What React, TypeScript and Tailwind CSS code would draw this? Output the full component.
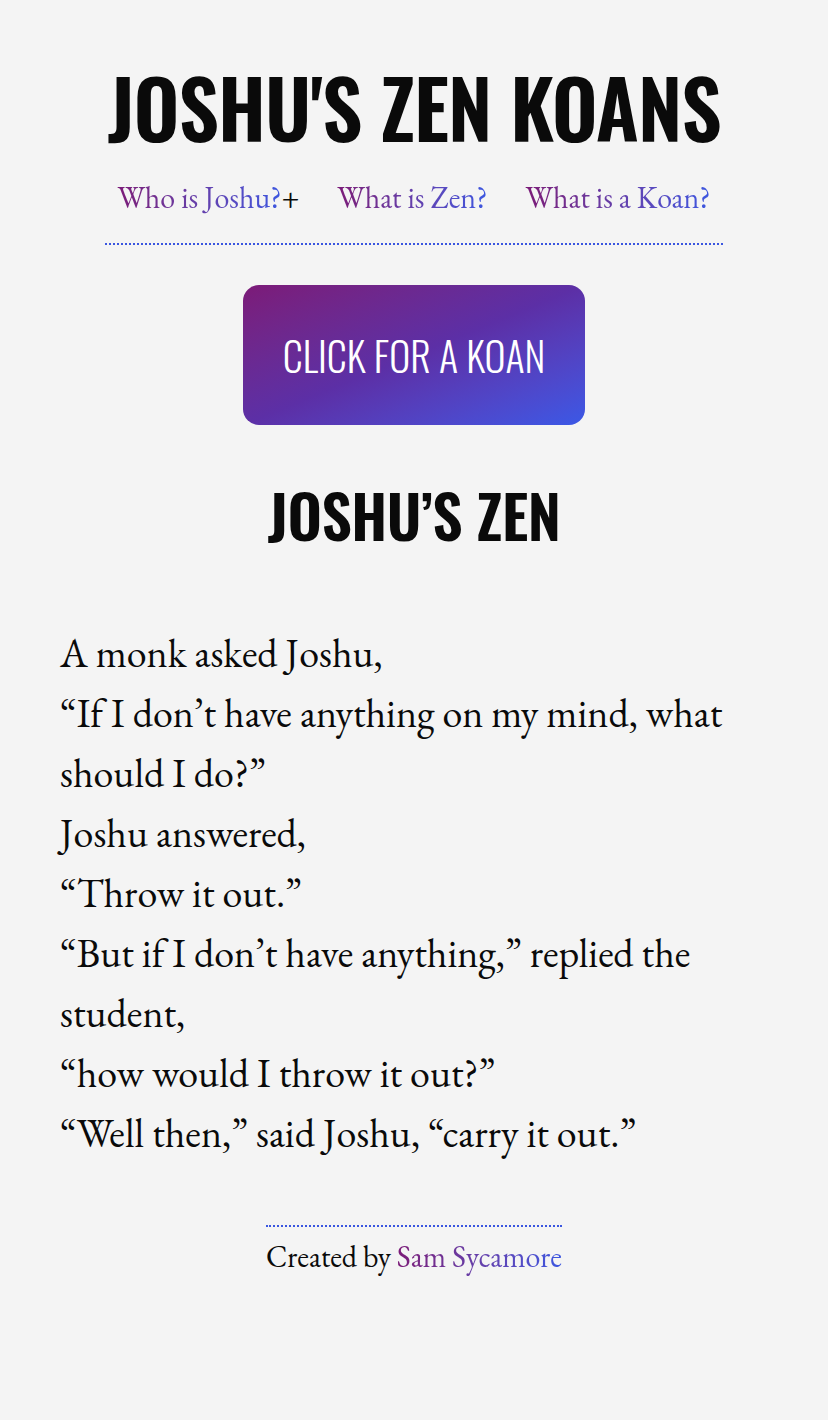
import React from "react";

const serif = "font-['EB_Garamond','Liberation_Serif',serif]";
const condensed = "font-['Oswald','Liberation_Sans_Narrow','DejaVu_Sans_Condensed',sans-serif]";
const gradText =
  "bg-gradient-to-r from-[#7b1a78] to-[#3a56e0] bg-clip-text text-transparent";

const koan = [
  "A monk asked Joshu,",
  "“If I don’t have anything on my mind, what should I do?”",
  "Joshu answered,",
  "“Throw it out.”",
  "“But if I don’t have anything,” replied the student,",
  "“how would I throw it out?”",
  "“Well then,” said Joshu, “carry it out.”",
];

export default function App() {
  return (
    <div className={`min-h-[1420px] bg-[#f4f4f4] text-[#0a0a0a] ${serif}`}>
      <header className="flex flex-col items-center pt-[56px]">
        <h1 className={`${condensed} font-semibold text-[80px] leading-[100px] tracking-[-1px]`}>
          JOSHU'S ZEN KOANS
        </h1>
        <nav className="mt-[22px] w-[618px] flex justify-center gap-[38px] border-b-2 border-dotted border-[#3a56e0] pb-[25px] text-[30px] leading-[40px]">
          <span>
            <a className={gradText}>Who is Joshu?</a>
            <span>+</span>
          </span>
          <a className={gradText}>What is Zen?</a>
          <a className={gradText}>What is a Koan?</a>
        </nav>
      </header>

      <main className="flex flex-col items-center">
        <button
          className={`mt-[40px] w-[342px] h-[140px] rounded-[16px] bg-gradient-to-br from-[#7c1a78] via-[#5c2fa6] to-[#3a58e6] text-white ${condensed} font-light text-[40px]`}
        >
          CLICK FOR A KOAN
        </button>

        <h2 className={`mt-[49px] ${condensed} font-semibold text-[60px] leading-[80px] tracking-[-0.5px]`}>
          JOSHU’S ZEN
        </h2>

        <div className="mt-[69px] w-full px-[60px] text-[40px] leading-[60px]">
          {koan.map((line, i) => (
            <p key={i}>{line}</p>
          ))}
        </div>

        <footer className="mt-[62px] flex flex-col items-center">
          <div className="border-t-2 border-dotted border-[#3a56e0] pt-[10px] text-[30px] leading-[40px]">
            Created by <a className={gradText}>Sam Sycamore</a>
          </div>
        </footer>
      </main>
    </div>
  );
}
